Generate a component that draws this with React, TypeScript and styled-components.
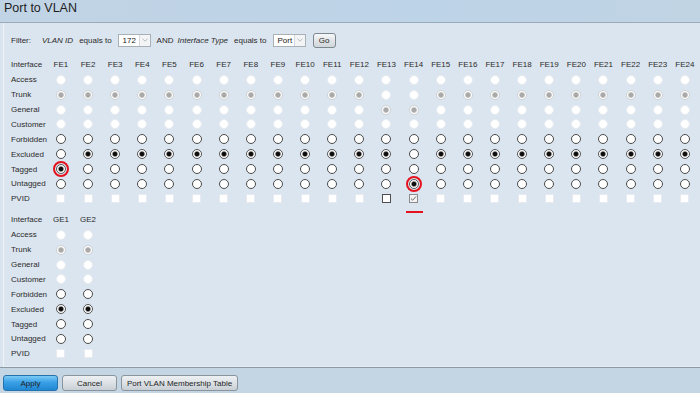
import React from 'react';
import styled, { createGlobalStyle, css } from 'styled-components';

type CellSpec =
  | { kind: 'radio'; checked: boolean; disabled: boolean; ring?: boolean }
  | { kind: 'box'; checked: boolean; disabled: boolean; underline?: boolean };

const ROWS = ['Access', 'Trunk', 'General', 'Customer', 'Forbidden', 'Excluded', 'Tagged', 'Untagged', 'PVID'];

const radio = (checked: boolean, disabled: boolean, ring = false): CellSpec => ({ kind: 'radio', checked, disabled, ring });

const feCell = (row: string, p: number): CellSpec => {
  switch (row) {
    case 'Access':
      return radio(false, true);
    case 'Trunk':
      return radio(p !== 13 && p !== 14, true);
    case 'General':
      return radio(p === 13 || p === 14, true);
    case 'Customer':
      return radio(false, true);
    case 'Forbidden':
      return radio(false, false);
    case 'Excluded':
      return radio(p !== 1 && p !== 14, false);
    case 'Tagged':
      return radio(p === 1, false, p === 1);
    case 'Untagged':
      return radio(p === 14, false, p === 14);
    default:
      return { kind: 'box', checked: p === 14, disabled: p !== 13 && p !== 14, underline: p === 14 };
  }
};

const geCell = (row: string): CellSpec => {
  switch (row) {
    case 'Trunk':
      return radio(true, true);
    case 'Access':
    case 'General':
    case 'Customer':
      return radio(false, true);
    case 'Excluded':
      return radio(true, false);
    case 'Forbidden':
    case 'Tagged':
    case 'Untagged':
      return radio(false, false);
    default:
      return { kind: 'box', checked: false, disabled: true };
  }
};

const GlobalStyle = createGlobalStyle`
  body {
    margin: 0;
    background: #dae4ee;
    font-family: "Liberation Sans", Arial, sans-serif;
    color: #2b2b2b;
  }
`;

const Page = styled.div`
  width: 700px;
  height: 393px;
  display: flex;
  flex-direction: column;
  overflow: hidden;
`;

const TitleBar = styled.div`
  height: 22px;
  flex: none;
  padding-left: 4px;
  background: linear-gradient(90deg, #c1d4e5 0%, #bdd3e7 60%, #c0d4e4 100%);
  border-bottom: 1px solid #9babba;
  font-size: 12.5px;
  line-height: 17px;
  color: #1e1e1e;
`;

const Panel = styled.div`
  flex: 1;
  margin-left: 3px;
  padding: 9px 0 0 7px;
  border-left: 1px solid #eef3f8;
  border-bottom: 1px solid #e6edf3;
  background: #dbe5ef;
`;

const FilterRow = styled.div`
  display: flex;
  align-items: center;
  gap: 6px;
  height: 16px;
  font-size: 8px;
`;

const FilterText = styled.span<{ $italic?: boolean; $after?: number }>`
  font-style: ${({ $italic }) => ($italic ? 'italic' : 'normal')};
  margin-right: ${({ $after }) => $after ?? 0}px;
  white-space: nowrap;
`;

const SelectBox = styled.div`
  width: 33px;
  height: 13px;
  box-sizing: border-box;
  display: flex;
  background: #fff;
  border: 1px solid #a9b0b6;
`;

const SelectValue = styled.span`
  flex: 1;
  padding-left: 4px;
  font-size: 8px;
  line-height: 11px;
  color: #222;
`;

const SelectArrow = styled.span`
  width: 10px;
  display: flex;
  align-items: center;
  justify-content: center;
  border-left: 1px solid #d4d8dc;
  background: #f3f4f5;
`;

const buttonBase = css`
  box-sizing: border-box;
  height: 16px;
  border-radius: 3px;
  font-family: inherit;
  font-size: 8px;
  color: #1e1e1e;
  padding: 0;
  display: flex;
  align-items: center;
  justify-content: center;
`;

const GoButton = styled.div`
  ${buttonBase};
  width: 23px;
  height: 15px;
  margin-left: 1px;
  border: 1px solid #7e8891;
  background: linear-gradient(#f7f8f9, #dfe3e6 55%, #d1d6da);
`;

const Grid = styled.div<{ $cols: number; $top: number }>`
  display: grid;
  grid-template-columns: 36.4px repeat(${({ $cols }) => $cols}, 27.13px);
  grid-auto-rows: 14.875px;
  margin-top: ${({ $top }) => $top}px;
  font-size: 8px;
`;

const RowLabel = styled.div`
  display: flex;
  align-items: center;
  white-space: nowrap;
`;

const ColHead = styled.div`
  display: flex;
  align-items: center;
  justify-content: center;
  white-space: nowrap;
`;

const Cell = styled.div`
  position: relative;
  display: flex;
  align-items: center;
  justify-content: center;
`;

const Radio = styled.span<{ $checked: boolean; $disabled: boolean }>`
  width: 10px;
  height: 10px;
  box-sizing: border-box;
  border-radius: 50%;
  ${({ $checked, $disabled }) => {
    if ($disabled && $checked)
      return css`
        border: 1px solid #cfd2d4;
        background: radial-gradient(circle, #a9a9a9 0 1.9px, #cbcbcb 2.6px, #fff 3.3px);
      `;
    if ($disabled)
      return css`
        border: 1px solid #e8ecf0;
        background: #fff;
      `;
    if ($checked)
      return css`
        border: 1px solid #555;
        background: radial-gradient(circle, #0d0d0d 0 1.9px, #8a8a8a 2.5px, #fff 3.2px);
      `;
    return css`
      border: 1px solid #4a4a4a;
      background: #fff;
    `;
  }}
`;

const Box = styled.span<{ $checked: boolean; $disabled: boolean }>`
  width: 9px;
  height: 9px;
  box-sizing: border-box;
  display: flex;
  align-items: center;
  justify-content: center;
  background: ${({ $checked }) => ($checked ? '#f2f2f2' : '#fff')};
  border: 1px solid
    ${({ $checked, $disabled }) => ($checked ? '#8c8c8c' : $disabled ? '#e7ebef' : '#4f4f4f')};
`;

const Ring = styled.span`
  position: absolute;
  left: 50%;
  top: 50%;
  width: 16px;
  height: 16px;
  margin: -8px 0 0 -8px;
  box-sizing: border-box;
  border-radius: 50%;
  border: 2.5px solid #e5111c;
`;

const Underline = styled.span`
  position: absolute;
  left: 50%;
  top: 50%;
  width: 17px;
  height: 2px;
  margin: 12px 0 0 -8px;
  background: #e5111c;
`;

const Footer = styled.div`
  height: 26px;
  flex: none;
  box-sizing: border-box;
  padding: 7px 0 0 3px;
  display: flex;
  gap: 4px;
  background: #c4d5e3;
  border-top: 1px solid #8a9aa4;
`;

const FooterButton = styled.div<{ $primary?: boolean; $width: number }>`
  ${buttonBase};
  width: ${({ $width }) => $width}px;
  border: 1px solid ${({ $primary }) => ($primary ? '#2572ad' : '#8a949c')};
  background: ${({ $primary }) =>
    $primary
      ? 'linear-gradient(#7ccaf5, #3aa0e6 45%, #1f87d2 100%)'
      : 'linear-gradient(#eef1f3, #dce1e5 50%, #c8cfd5)'};
`;

const Chevron = () => (
  <svg width="6" height="4" viewBox="0 0 6 4">
    <path d="M0.5 0.8 L3 3.2 L5.5 0.8" fill="none" stroke="#a3a8ad" strokeWidth="0.8" />
  </svg>
);

const Check = () => (
  <svg width="7" height="7" viewBox="0 0 7 7">
    <path d="M1 3.6 L2.7 5.2 L6 1.5" fill="none" stroke="#5a5a5a" strokeWidth="0.9" />
  </svg>
);

const Select: React.FC<{ value: string }> = ({ value }) => (
  <SelectBox>
    <SelectValue>{value}</SelectValue>
    <SelectArrow>
      <Chevron />
    </SelectArrow>
  </SelectBox>
);

const renderCell = (spec: CellSpec, key: string) => (
  <Cell key={key}>
    {spec.kind === 'radio' ? (
      <>
        <Radio $checked={spec.checked} $disabled={spec.disabled} />
        {spec.ring && <Ring />}
      </>
    ) : (
      <>
        <Box $checked={spec.checked} $disabled={spec.disabled}>
          {spec.checked && <Check />}
        </Box>
        {spec.underline && <Underline />}
      </>
    )}
  </Cell>
);

const PortTable: React.FC<{ ports: string[]; top: number; cell: (row: string, p: number) => CellSpec }> = ({
  ports,
  top,
  cell,
}) => (
  <Grid $cols={ports.length} $top={top}>
    <RowLabel>Interface</RowLabel>
    {ports.map((p) => (
      <ColHead key={p}>{p}</ColHead>
    ))}
    {ROWS.map((row) => (
      <React.Fragment key={row}>
        <RowLabel>{row}</RowLabel>
        {ports.map((p, i) => renderCell(cell(row, i + 1), `${row}-${p}`))}
      </React.Fragment>
    ))}
  </Grid>
);

const FE_PORTS = Array.from({ length: 24 }, (_, i) => `FE${i + 1}`);

export default function App() {
  return (
    <Page>
      <GlobalStyle />
      <TitleBar>Port to VLAN</TitleBar>
      <Panel>
        <FilterRow>
          <FilterText $after={5}>Filter:</FilterText>
          <FilterText $italic>VLAN ID</FilterText>
          <FilterText>equals to</FilterText>
          <Select value="172" />
          <FilterText $after={-2}>AND</FilterText>
          <FilterText $italic>Interface Type</FilterText>
          <FilterText>equals to</FilterText>
          <Select value="Port" />
          <GoButton>Go</GoButton>
        </FilterRow>
        <PortTable ports={FE_PORTS} top={9.5} cell={feCell} />
        <PortTable ports={['GE1', 'GE2']} top={6.25} cell={(row) => geCell(row)} />
      </Panel>
      <Footer>
        <FooterButton $primary $width={55}>
          Apply
        </FooterButton>
        <FooterButton $width={55}>Cancel</FooterButton>
        <FooterButton $width={117}>Port VLAN Membership Table</FooterButton>
      </Footer>
    </Page>
  );
}
